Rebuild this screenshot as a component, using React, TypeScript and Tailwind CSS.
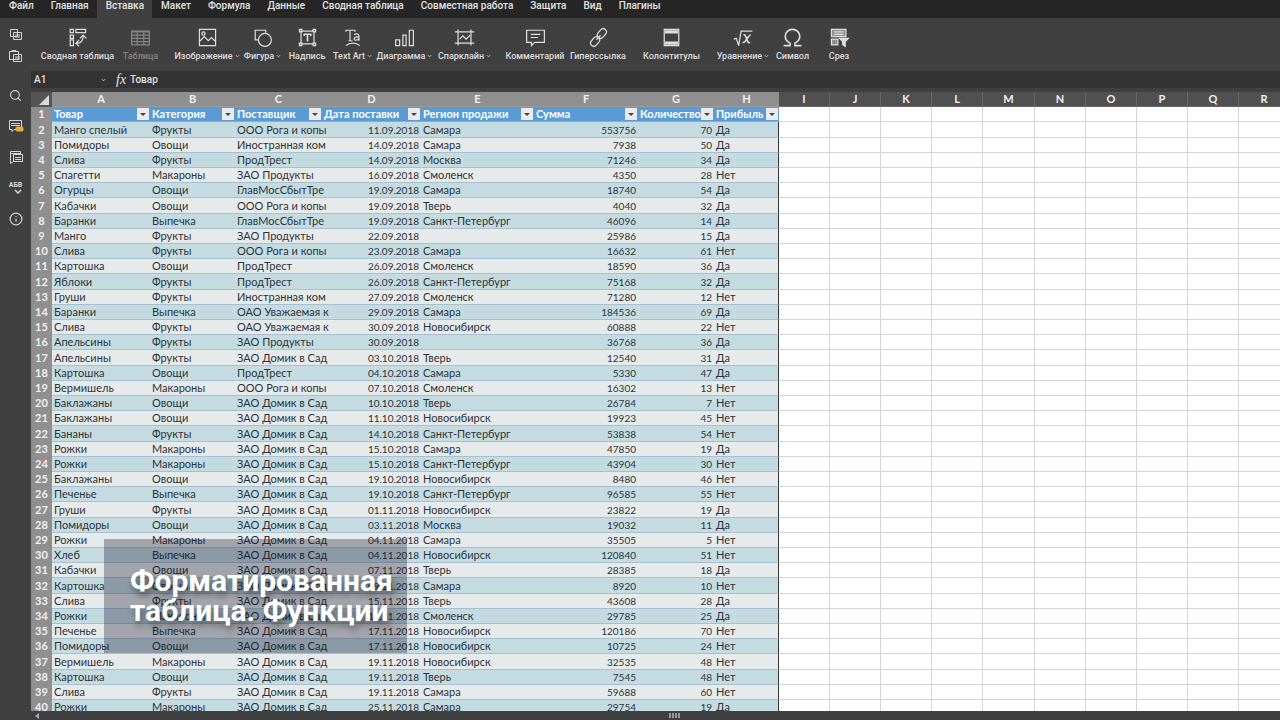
import { LuSearch, LuInfo } from "react-icons/lu";

const tabs = ["Файл", "Главная", "Вставка", "Макет", "Формула", "Данные", "Сводная таблица", "Совместная работа", "Защита", "Вид", "Плагины"];

const tools = [
  { name: "Сводная таблица", box: "ml-[11px] w-[71px]", menu: false, icon: <><path d="M3 2h4v4H3zM10 2h12v4H10zM3 9h4v4H3zM3 15h4v7H3z" /><path d="M11 19c6 0 8-3 8-9M15 13l4-4 4 4M14 15l-4 4 4 4" /></> },
  { name: "Таблица", box: "ml-[10px] w-[35px]", menu: false, disabled: true, icon: <path d="M1 4h22v17H1zM1 5h22M1 9h22M1 13h22M1 17h22M8 4v17M16 4v17" /> },
  { name: "Изображение", box: "ml-[18px] w-[62px]", menu: true, icon: <><path d="M2 2h20v20H2zM2 17l6-6 5 5 4-4 5 5" /><circle cx="7" cy="7" r="2" /></> },
  { name: "Фигура", box: "ml-[6px] w-[37px]", menu: true, icon: <><path d="M7 15H3V3h13v3" /><circle cx="15" cy="15" r="8" /></> },
  { name: "Надпись", box: "ml-[8px] w-[36px]", menu: false, icon: <><path d="M4 4h16v16H4z" /><path d="M8 10V8h8v2M12 8v9" strokeWidth="2" /><path d="M2 2h3v3H2zM19 2h3v3h-3zM2 19h3v3H2zM19 19h3v3h-3z" /></> },
  { name: "Text Art", box: "ml-[9px] w-[37px]", menu: true, icon: <><path d="M4 5V3h11v2M9 3v13M7 16h5M14 9c1-2 6-2 6 1v6M20 11c-4 0-6 1-6 3s4 2 6-1" /><path d="M4 22c5-4 12-4 17 0" /></> },
  { name: "Диаграмма", box: "ml-[7px] w-[53px]", menu: true, icon: <path d="M1 15h5v7H1zM10 9h4v13h-4zM18 3h5v19h-5z" /> },
  { name: "Спарклайн", box: "ml-[7px] w-[53px]", menu: true, icon: <><path d="M4 2v20M20 2v20M0 5h24M0 19h24" /><path d="M6 14l4-4 4 4 5-5" /></> },
  { name: "Комментарий", box: "ml-[16px] w-[56px]", menu: false, icon: <path d="M1 3h22v15H11l-4 4v-4H1zM6 8h12M6 12h9" /> },
  { name: "Гиперссылка", box: "ml-[8px] w-[54px]", menu: false, icon: <g transform="rotate(-50 12 12)"><rect x="-1" y="8" width="13" height="8" rx="4" /><rect x="12" y="8" width="13" height="8" rx="4" /><path d="M8 12h8" /></g> },
  { name: "Колонтитулы", box: "ml-[19px] w-[55px]", menu: false, icon: <><path d="M3 2h18v20H3z" /><path d="M4 5h16M4 19h16" strokeWidth="4" /></> },
  { name: "Уравнение", box: "ml-[18px] w-[52px]", menu: true, icon: <><path d="M0 14l3-1 3 9L9 4h14" /><path d="M12 9c4-2 4 12 8 9M21 9c-3-1-6 11-10 9" strokeWidth="2" /></> },
  { name: "Символ", box: "ml-[7px] w-[33px]", menu: false, icon: <path d="M1 22h8v-3C5 17 3 14 3 10.500a9 8.500 0 0 1 18 0c0 3.500-2 6.500-6 8.500v3h8" strokeWidth="2" /> },
  { name: "Срез", box: "ml-[19px] w-[22px]", menu: false, icon: <><path d="M2 2h18v9H2zM2 14h8v7H2z" fill="currentColor" fillOpacity="0.500" /><path d="M5 5h12M5 8h12M12 13h11l-4 4v6l-3-2v-4z" fill="currentColor" /></> },
];

const columns = [
  { letter: "A", title: "Товар", width: "w-[98px]" },
  { letter: "B", title: "Категория", width: "w-[85px]" },
  { letter: "C", title: "Поставщик", width: "w-[87px]" },
  { letter: "D", title: "Дата поставки", width: "w-[99px]" },
  { letter: "E", title: "Регион продажи", width: "w-[113px]" },
  { letter: "F", title: "Сумма", width: "w-[104px]" },
  { letter: "G", title: "Количество", width: "w-[76px]" },
  { letter: "H", title: "Прибыль", width: "w-[65px]" },
];

const emptyColumns = ["I", "J", "K", "L", "M", "N", "O", "P", "Q", "R"];

const rows = [
  ["Манго спелый", "Фрукты", "ООО Рога и копы", "11.09.2018", "Самара", "553756", "70", "Да"],
  ["Помидоры", "Овощи", "Иностранная ком", "14.09.2018", "Самара", "7938", "50", "Да"],
  ["Слива", "Фрукты", "ПродТрест", "14.09.2018", "Москва", "71246", "34", "Да"],
  ["Спагетти", "Макароны", "ЗАО Продукты", "16.09.2018", "Смоленск", "4350", "28", "Нет"],
  ["Огурцы", "Овощи", "ГлавМосСбытТре", "19.09.2018", "Самара", "18740", "54", "Да"],
  ["Кабачки", "Овощи", "ООО Рога и копы", "19.09.2018", "Тверь", "4040", "32", "Да"],
  ["Баранки", "Выпечка", "ГлавМосСбытТре", "19.09.2018", "Санкт-Петербург", "46096", "14", "Да"],
  ["Манго", "Фрукты", "ЗАО Продукты", "22.09.2018", "", "25986", "15", "Да"],
  ["Слива", "Фрукты", "ООО Рога и копы", "23.09.2018", "Самара", "16632", "61", "Нет"],
  ["Картошка", "Овощи", "ПродТрест", "26.09.2018", "Смоленск", "18590", "36", "Да"],
  ["Яблоки", "Фрукты", "ПродТрест", "26.09.2018", "Санкт-Петербург", "75168", "32", "Да"],
  ["Груши", "Фрукты", "Иностранная ком", "27.09.2018", "Смоленск", "71280", "12", "Нет"],
  ["Баранки", "Выпечка", "ОАО Уважаемая к", "29.09.2018", "Самара", "184536", "69", "Да"],
  ["Слива", "Фрукты", "ОАО Уважаемая к", "30.09.2018", "Новосибирск", "60888", "22", "Нет"],
  ["Апельсины", "Фрукты", "ЗАО Продукты", "30.09.2018", "", "36768", "36", "Да"],
  ["Апельсины", "Фрукты", "ЗАО Домик в Сад", "03.10.2018", "Тверь", "12540", "31", "Да"],
  ["Картошка", "Овощи", "ПродТрест", "04.10.2018", "Самара", "5330", "47", "Да"],
  ["Вермишель", "Макароны", "ООО Рога и копы", "07.10.2018", "Смоленск", "16302", "13", "Нет"],
  ["Баклажаны", "Овощи", "ЗАО Домик в Сад", "10.10.2018", "Тверь", "26784", "7", "Нет"],
  ["Баклажаны", "Овощи", "ЗАО Домик в Сад", "11.10.2018", "Новосибирск", "19923", "45", "Нет"],
  ["Бананы", "Фрукты", "ЗАО Домик в Сад", "14.10.2018", "Санкт-Петербург", "53838", "54", "Нет"],
  ["Рожки", "Макароны", "ЗАО Домик в Сад", "15.10.2018", "Самара", "47850", "19", "Да"],
  ["Рожки", "Макароны", "ЗАО Домик в Сад", "15.10.2018", "Санкт-Петербург", "43904", "30", "Нет"],
  ["Баклажаны", "Овощи", "ЗАО Домик в Сад", "19.10.2018", "Новосибирск", "8480", "46", "Нет"],
  ["Печенье", "Выпечка", "ЗАО Домик в Сад", "19.10.2018", "Санкт-Петербург", "96585", "55", "Нет"],
  ["Груши", "Фрукты", "ЗАО Домик в Сад", "01.11.2018", "Новосибирск", "23822", "19", "Да"],
  ["Помидоры", "Овощи", "ЗАО Домик в Сад", "03.11.2018", "Москва", "19032", "11", "Да"],
  ["Рожки", "Макароны", "ЗАО Домик в Сад", "04.11.2018", "Самара", "35505", "5", "Нет"],
  ["Хлеб", "Выпечка", "ЗАО Домик в Сад", "04.11.2018", "Новосибирск", "120840", "51", "Нет"],
  ["Кабачки", "Овощи", "ЗАО Домик в Сад", "07.11.2018", "Тверь", "28385", "18", "Да"],
  ["Картошка", "Овощи", "ЗАО Домик в Сад", "09.11.2018", "Самара", "8920", "10", "Нет"],
  ["Слива", "Фрукты", "ЗАО Домик в Сад", "15.11.2018", "Тверь", "43608", "28", "Да"],
  ["Рожки", "Макароны", "ЗАО Домик в Сад", "16.11.2018", "Смоленск", "29785", "25", "Да"],
  ["Печенье", "Выпечка", "ЗАО Домик в Сад", "17.11.2018", "Новосибирск", "120186", "70", "Нет"],
  ["Помидоры", "Овощи", "ЗАО Домик в Сад", "17.11.2018", "Новосибирск", "10725", "24", "Нет"],
  ["Вермишель", "Макароны", "ЗАО Домик в Сад", "19.11.2018", "Новосибирск", "32535", "48", "Нет"],
  ["Картошка", "Овощи", "ЗАО Домик в Сад", "19.11.2018", "Тверь", "7545", "48", "Нет"],
  ["Слива", "Фрукты", "ЗАО Домик в Сад", "19.11.2018", "Самара", "59688", "60", "Нет"],
  ["Рожки", "Макароны", "ЗАО Домик в Сад", "25.11.2018", "Самара", "29754", "19", "Да"],
];

const numeric = [3, 5, 6];

const Caret = () => (
  <svg viewBox="0 0 6 4" className="h-1 w-[5px] shrink-0" fill="none" stroke="currentColor">
    <path d="M1 1l2 2 2-2" />
  </svg>
);

const Toolbar = () => {
  return (
    <div className="flex h-[53px] shrink-0 bg-[#404040]">
      <div className="flex w-[31px] shrink-0 flex-col items-center gap-2 pt-[10px]">
        <button aria-label="Копировать">
          <svg viewBox="0 0 13 13" className="size-[13px]" fill="#404040" stroke="#d4d4d4">
            <path d="M1.500 1.500h7v7h-7zM4.500 4.500h8v7h-8zM6 7h5M6 9h5" />
          </svg>
        </button>
        <button aria-label="Вставить">
          <svg viewBox="0 0 13 13" className="size-[13px]" fill="#404040" stroke="#d4d4d4">
            <path d="M.5 2.500h9v8h-9zM3 1.500h4v1H3zM4.500 5.500h8v7h-8zM6 8h5M6 10h5" />
          </svg>
        </button>
      </div>
      {tools.map((tool) => (
        <button
          key={tool.name}
          disabled={tool.disabled}
          className={`${tool.box} flex shrink-0 flex-col items-center pt-[9px] text-[#dedede] disabled:text-[#858585]`}
        >
          <svg viewBox="-1 -1 26 26" className="size-[21px]" fill="none" stroke="currentColor" strokeWidth="1.500">
            {tool.icon}
          </svg>
          <span className="mt-[2px] flex items-center gap-[2px] text-[9px] leading-3 font-medium whitespace-nowrap">
            {tool.name}
            {tool.menu && <Caret />}
          </span>
        </button>
      ))}
    </div>
  );
};

const SideBar = () => {
  return (
    <nav className="flex w-[31px] shrink-0 flex-col items-center gap-[17px] bg-[#404040] pt-[18px] text-[#d6d6d6]">
      <button aria-label="Поиск"><LuSearch className="size-[13px]" /></button>
      <button aria-label="Комментарии">
        <svg viewBox="0 0 16 14" className="h-[14px] w-4" fill="none" stroke="currentColor">
          <path d="M1.500 1.500h12v9H6l-2 2v-2H1.500zM3 4.500h9M3 6.500h9" />
          <rect x="8" y="8" width="7" height="4" rx="1" fill="#e0ae3c" stroke="#e0ae3c" />
        </svg>
      </button>
      <button aria-label="Чат">
        <svg viewBox="0 0 14 14" className="size-[14px]" fill="#404040" stroke="currentColor">
          <path d="M1.500 10.500v-9h10v3M4.500 4.500h9v7h-9l-3 2v-3M1.500 3.500h10M4.500 4.500h9v7h-9zM6 7.500h6M6 9.500h6" />
        </svg>
      </button>
      <button aria-label="Проверка орфографии" className="flex h-[14px] flex-col items-center text-[7px] leading-2 font-bold">
        АБВ
        <svg viewBox="0 0 8 5" className="ml-1 h-[5px] w-2" fill="none" stroke="currentColor" strokeWidth="1.500"><path d="M1 1l3 3 3-3" /></svg>
      </button>
      <button aria-label="О программе"><LuInfo className="size-[14px]" /></button>
    </nav>
  );
};

const Sheet = () => {
  return (
    <table className="w-full table-fixed border-separate border-spacing-0 bg-white font-[Lato,'Noto_Sans',sans-serif] text-[11px] leading-[14px] whitespace-nowrap text-[#2c3338]">
      <colgroup>
        <col className="w-[21px]" />
        {columns.map((c) => <col key={c.letter} className={c.width} />)}
        {emptyColumns.map((letter) => <col key={letter} className="w-[51px] nth-[14]:w-[52px]" />)}
        <col />
      </colgroup>
      <thead>
        <tr className="h-[15px] text-[#f0f0f0]">
          <td className="bg-[#555] p-0">
            <svg viewBox="0 0 21 14" className="h-[14px] w-full"><path d="M18 2v10H8z" fill="#d9d9d9" /></svg>
          </td>
          {columns.map((c) => (
            <th key={c.letter} scope="col" className="border-b border-[#9c9c9c] bg-[#8f8f8f] p-0 font-bold">{c.letter}</th>
          ))}
          {emptyColumns.map((letter) => (
            <th key={letter} scope="col" className="border-r border-b border-[#666] bg-[#505050] p-0 font-bold">{letter}</th>
          ))}
          <td className="bg-[#505050] p-0"></td>
        </tr>
      </thead>
      <tbody>
        <tr className="h-[15px]">
          <th scope="row" className="border-b border-[#8f8f8f] bg-[#8f8f8f] p-0 font-bold text-[#f0f0f0]">1</th>
          {columns.map((c) => (
            <th key={c.letter} scope="col" className="overflow-hidden border-b border-[#7fb0dd] bg-[#5b9bd5] p-0 pl-[2px] text-left font-bold text-white">
              <div className="flex items-center justify-between">
                {c.title}
                <button aria-label={`Фильтр: ${c.title}`} className="mr-[1px] flex h-3 w-3 shrink-0 items-center justify-center bg-[#ebebeb] text-[#444]">
                  <svg viewBox="0 0 6 3" className="h-[3px] w-[6px]"><path d="M0 0h6L3 3z" fill="currentColor" /></svg>
                </button>
              </div>
            </th>
          ))}
          {emptyColumns.map((letter) => <td key={letter} className="border-r border-b border-[#d4d4d4] p-0"></td>)}
          <td className="border-b border-[#d4d4d4] p-0"></td>
        </tr>
        {rows.map((row, i) => (
          <tr key={i} className="h-[15px] bg-[#e7eaea] even:bg-[#c5dbe2] nth-[5n+2]:h-4">
            <th scope="row" className="border-b border-[#8f8f8f] bg-[#8f8f8f] p-0 font-bold text-[#f0f0f0]">{i + 2}</th>
            {row.map((cell, j) => (
              <td key={j} className={`border-b border-[#a9bfcf] p-0 pl-[2px] ${numeric.includes(j) ? "pr-[2px] text-right text-[10px]" : ""} ${j === 7 ? "border-r border-r-[#333]" : ""}`}>
                {cell}
              </td>
            ))}
            {emptyColumns.map((letter) => <td key={letter} className="border-r border-b border-[#d4d4d4] bg-white p-0"></td>)}
            <td className="border-b border-[#d4d4d4] bg-white p-0"></td>
          </tr>
        ))}
      </tbody>
    </table>
  );
};

const App = () => {
  return (
    <div className="relative flex h-screen flex-col overflow-hidden bg-[#404040] font-[Roboto,sans-serif] text-[#e3e3e3]">
      <nav className="flex h-[18px] shrink-0 bg-[#262626]">
        {tabs.map((tab) => (
          <button
            key={tab}
            className={`pr-2 pb-[6px] pl-[9px] text-[10px] leading-3 font-medium whitespace-nowrap ${tab === "Вставка" ? "bg-[#404040]" : ""}`}
          >
            {tab}
          </button>
        ))}
      </nav>
      <Toolbar />
      <div className="flex min-h-0 flex-1">
        <SideBar />
        <div className="flex min-w-0 flex-1 flex-col">
          <div className="flex h-[17px] shrink-0 items-center bg-[#333] text-[10px] font-medium">
            <button className="flex w-[75px] items-center justify-between pl-[3px]">A1 <Caret /></button>
            <label htmlFor="formula" className="w-[24px] pl-[10px] font-[Liberation_Serif,serif] text-sm leading-4 italic">fx</label>
            <input id="formula" defaultValue="Товар" className="flex-1 bg-transparent outline-none" />
          </div>
          <div className="mt-1 min-h-0 flex-1 overflow-hidden">
            <Sheet />
          </div>
        </div>
      </div>
      <div className="flex h-[9px] shrink-0 items-center bg-[#404040]">
        <svg viewBox="0 0 4 6" className="ml-[35px] h-[6px] w-1"><path d="M4 0v6L0 3z" fill="#aaa" /></svg>
        <svg viewBox="0 0 11 5" className="ml-[630px] h-[5px] w-[11px]"><path d="M1 0v5M4 0v5M7 0v5M10 0v5" stroke="#999" strokeWidth="2" /></svg>
      </div>
      <div className="absolute bottom-[67px] left-[104px] flex h-[114px] w-[303px] items-center bg-[#141428]/32 pl-[26px]">
        <h1 className="text-[30px] leading-[30px] font-bold whitespace-nowrap text-white [text-shadow:2px_5px_6px_rgba(0,0,0,0.4)]">
          Форматированная<br />таблица. Функции
        </h1>
      </div>
    </div>
  );
};

export default App;
